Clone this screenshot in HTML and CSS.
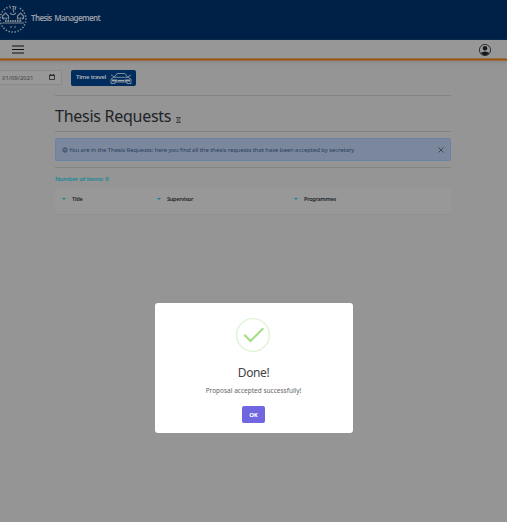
FILE: index.html
```html
<!DOCTYPE html>
<html lang="en">
<head>
<meta charset="utf-8">
<title>Thesis Management</title>
<link rel="stylesheet" href="styles.css">
</head>
<body>
<header class="brand">
  <svg class="crest" viewBox="0 0 30 32" fill="none" stroke="#7f8894">
    <path d="M8.500 4.500A12.900 12.900 0 1 0 19.500 4.500" stroke-width="1.500" stroke-dasharray="1.500 1.500"/>
    <path d="M10.500 2.500l1 3M17 3l-1 4M13 3.500h2l-1 3 1 3M11 10l2 1.500h2l2-1.500" stroke-width="1.100"/>
    <path d="M3.500 16v-3l3-3 3 3v3M18.500 16v-3l3-3 3 3v3M3 20h22M11 24h2M15 24h2" stroke-width="1.200"/>
    <path d="M4 15.500h6M18 15.500h6M6 18h17" stroke-width="1.800" stroke-dasharray="1.600 .800"/>
  </svg>
  <span class="brand-name">Thesis Management</span>
</header>
<nav class="toolbar">
  <svg class="menu" viewBox="0 0 12 9"><path d="M0 1h12M0 4.500h12M0 8h12" stroke="#111" stroke-width="1"/></svg>
  <svg class="user" viewBox="0 0 16 16"><circle cx="8" cy="8" r="5.600" fill="none" stroke="#15191c" stroke-width=".8"/><circle cx="8" cy="6.200" r="2.200" fill="#15191c"/><path d="M3.700 11.100Q8 7.800 12.300 11.100Q8 15.500 3.700 11.100z" fill="#15191c"/></svg>
</nav>
<div class="travel">
  <div class="date"><span>01/09/2021</span>
    <svg class="cal" viewBox="0 0 6 6"><path d="M.5 1h5v4.500h-5zM.5 1.500h5M1.500 0v1M4.500 0v1" fill="none" stroke="#222" stroke-width=".8"/></svg>
  </div>
  <div class="travel-btn"><span>Time travel</span>
    <svg class="car" viewBox="0 0 22 13" fill="none" stroke="#9ca4ae" stroke-width=".8"><path d="M4.500 5L7 1.500h8L17.500 5M1 3l3.500 2M21 3l-3.500 2M1 7L4 5.300h14l3 1.700v4.500h-4V10H5v1.500H1z"/><path d="M2 8.600h5M15 8.600h5" stroke-width="2"/><path d="M7.500 8.600h7" stroke-width="1.500"/></svg>
  </div>
</div>
<main class="content">
  <div class="title-row">
    <h1>Thesis Requests</h1>
    <svg class="glass" viewBox="0 0 5 6"><path d="M.3 .5h4.400M.3 5.500h4.400M1 .5Q1 2 2.500 3Q4 2 4 .5M1 5.500Q1 4 2.500 3Q4 4 4 5.500" fill="none" stroke="#333" stroke-width=".8"/></svg>
  </div>
  <div class="notice">
    <svg class="info" viewBox="0 0 6 6"><circle cx="3" cy="3" r="2.200" fill="none" stroke="#26405f" stroke-width=".8"/><path d="M3 1.300v.8M3 2.600v2" stroke="#26405f" stroke-width=".9"/></svg>
    <span>You are in the Thesis Requests: here you find all the thesis requests that have been accepted by secretary</span>
    <svg class="close" viewBox="0 0 6 6"><path d="M.4 .4l5.200 5.200M5.600 .4L.4 5.600" stroke="#3d4854" stroke-width="1"/></svg>
  </div>
  <div class="count">Number of items: 0</div>
  <div class="table-head">
    <div class="col"><i class="caret"></i><span>Title</span></div>
    <div class="col"><i class="caret"></i><span>Supervisor</span></div>
    <div class="col"><i class="caret"></i><span>Programmes</span></div>
  </div>
</main>
<div class="overlay">
  <div class="dialog">
    <svg class="success" viewBox="0 0 36 36" fill="none"><circle cx="18" cy="18" r="16.400" stroke="#e1f3d7" stroke-width="1.400"/><path d="M9.300 17.700l6.200 6.200L28.300 11.300" stroke="#a5dc86" stroke-width="2.100"/></svg>
    <h2>Done!</h2>
    <p>Proposal accepted successfully!</p>
    <button>OK</button>
  </div>
</div>
</body>
</html>
```
FILE: styles.css
```css
* { box-sizing: border-box; }
body { margin: 0; height: 522px; overflow: hidden; background: #959595; font-family: "Noto Sans", "Open Sans", sans-serif; font-size: 6px; color: #202428; }
svg { display: block; flex: none; }
span { white-space: nowrap; }
.brand { height: 40px; background: #002147; display: flex; align-items: flex-start; }
.crest { width: 30px; height: 32px; margin: 3px 0 0 -1px; }
.brand-name { margin: 12px 0 0 2px; font-size: 8px; line-height: 12px; font-weight: 600; color: #999fa7; letter-spacing: -.64px; word-spacing: 1.2px; }
.toolbar { height: 21px; background: linear-gradient(#979797 18px, #9c7048 18px, #9c7048 19px, #974f0e 19px, #974f0e 20px, #9c7048 20px); display: flex; justify-content: space-between; padding: 0 14px 0 12px; box-shadow: 0 1px 3px #77777788; }
.menu { width: 12px; height: 9px; margin-top: 5px; }
.user { width: 16px; height: 16px; margin-top: 2px; }
.travel { display: flex; height: 34px; padding-top: 9px; }
.date { width: 62px; height: 15px; border: 1px solid #898989; border-left: 0; border-radius: 0 2px 2px 0; background: #989898; display: flex; justify-content: space-between; align-items: center; padding: 0 6px 0 2px; color: #3f4246; letter-spacing: -.05px; }
.cal { width: 6px; height: 6px; margin-top: -1px; }
.travel-btn { margin-left: 9px; width: 65px; height: 16px; border-radius: 2px; background: #002c5e; color: #b0b5bc; display: flex; align-items: center; justify-content: space-between; padding: 0 4px 0 5px; font-weight: 600; letter-spacing: -.26px; }
.travel-btn span { margin-top: -2px; }
.car { width: 22px; height: 13px; }
.content { margin: 0 56px 0 55px; border-top: 1px solid #848484; }
.title-row { height: 36px; border-bottom: 1px solid #848484; display: flex; }
h1 { margin: 9px 0 0; font-size: 16px; line-height: 22px; font-weight: 400; white-space: nowrap; letter-spacing: -.27px; }
.glass { width: 5px; height: 6px; margin: 21px 0 0 5px; }
.notice { margin-top: 6px; height: 23px; border: 1px solid #6c83a8; border-radius: 2px; background: #7a879c; color: #2b3f60; display: flex; align-items: center; padding: 0 6px; letter-spacing: -.095px; }
.info { width: 6px; height: 6px; margin-right: 1px; }
.close { width: 6px; height: 6px; margin-left: auto; }
.count { margin-top: 6px; height: 22px; border-top: 1px solid #848484; padding-top: 7px; line-height: 9px; font-weight: 600; color: #158896; white-space: nowrap; letter-spacing: -.24px; word-spacing: .5px; }
.table-head { height: 26px; background: #989898; border-bottom: 1px solid #919191; display: grid; grid-template-columns: 95px 137px 1fr; padding: 5px 0 0 7px; font-size: 5.5px; font-weight: 600; letter-spacing: -.25px; }
.col { display: flex; height: 9px; align-items: center; gap: 6px; }
.caret { border: 2px solid transparent; border-top: 2px solid #168391; border-bottom: 0; }
.overlay { position: absolute; inset: 0; }
.dialog { position: absolute; left: 154.5px; top: 302.5px; width: 198px; height: 130.5px; border-radius: 3px; background: #fff; display: flex; flex-direction: column; align-items: center; }
.success { width: 36px; height: 36px; margin-top: 14.5px; margin-right: 1px; }
h2 { margin: 12px 0 0; font-size: 12px; line-height: 16px; font-weight: 400; color: #424242; letter-spacing: -.4px; }
p { margin: 5px 0 0; font-size: 6.5px; line-height: 10px; color: #666; }
button { margin-top: 10px; width: 23px; height: 17px; border: 0; border-radius: 2px; padding: 1px 0 0; background: #7066e0; color: #fff; font: 700 6px/16px "Noto Sans", sans-serif; letter-spacing: -.2px; }
```
